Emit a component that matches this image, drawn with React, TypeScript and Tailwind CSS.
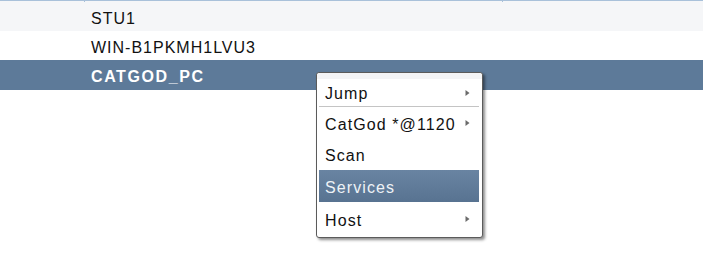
import { ReactNode } from 'react';

const font = "font-['Liberation_Sans',Arial,sans-serif]";

const Arrow = () => (
  <svg width="5" height="7" viewBox="0 0 5 7" className="absolute right-[9px] top-1/2 -translate-y-1/2">
    <path d="M0.5 0.5 L4.5 3.5 L0.5 6.5 Z" fill="#6b6b6b" />
  </svg>
);

interface ItemProps {
  label: string;
  h: string;
  sub?: boolean;
  active?: boolean;
}

const MenuItem = ({ label, h, sub, active }: ItemProps) => (
  <div
    className={`relative flex items-center pl-[6px] ${h} ${
      active ? 'bg-gradient-to-b from-[#6984a2] to-[#587391] text-[#eef2f6]' : 'text-[#111]'
    }`}
  >
    <span className="pt-[3px]">{label}</span>
    {sub && <Arrow />}
  </div>
);

const Row = ({ children, className }: { children: ReactNode; className: string }) => (
  <div className={`h-[29px] flex items-center pl-[91px] pt-[4px] ${className}`}>{children}</div>
);

export default function App() {
  return (
    <div className={`relative w-[703px] h-[269px] bg-white overflow-hidden ${font} text-[16px] tracking-[1px]`}>
      {/* header edge */}
      <div className="flex h-[2px] border-t border-[#a9c1da]">
        <div className="w-[85px] border-r border-[#a9c1da]" />
        <div className="w-[418px] border-r border-[#a9c1da]" />
        <div className="flex-1" />
      </div>
      <div className="bg-[#f5f6f8] h-[1px] -mt-[1px]" />

      <Row className="bg-[#f5f6f8] text-[#111]">STU1</Row>
      <Row className="bg-white text-[#111]">WIN-B1PKMH1LVU3</Row>
      <Row className="bg-[#5d7a99] text-white font-bold h-[30px] tracking-[1.6px]">CATGOD_PC</Row>

      {/* context menu */}
      <div className="absolute left-[316px] top-[72px] w-[167px] h-[166px] bg-white border border-[#5b5b5b] rounded-[3px] shadow-[2px_2px_3px_rgba(0,0,0,0.45)] px-[2px] pr-[3px] tracking-[1.1px]">
        <div className="h-[7px] -mx-[2px] -mr-[3px] bg-[#f3f4f6] border-b border-white rounded-t-[3px]" />
        <MenuItem label="Jump" h="h-[25px]" sub />
        <div className="h-[1px] bg-[#c4c4c4] mt-[1px]" />
        <MenuItem label="CatGod *@1120" h="h-[32px]" sub />
        <MenuItem label="Scan" h="h-[31px]" />
        <MenuItem label="Services" h="h-[32px]" active />
        <MenuItem label="Host" h="h-[34px]" sub />
      </div>
    </div>
  );
}
